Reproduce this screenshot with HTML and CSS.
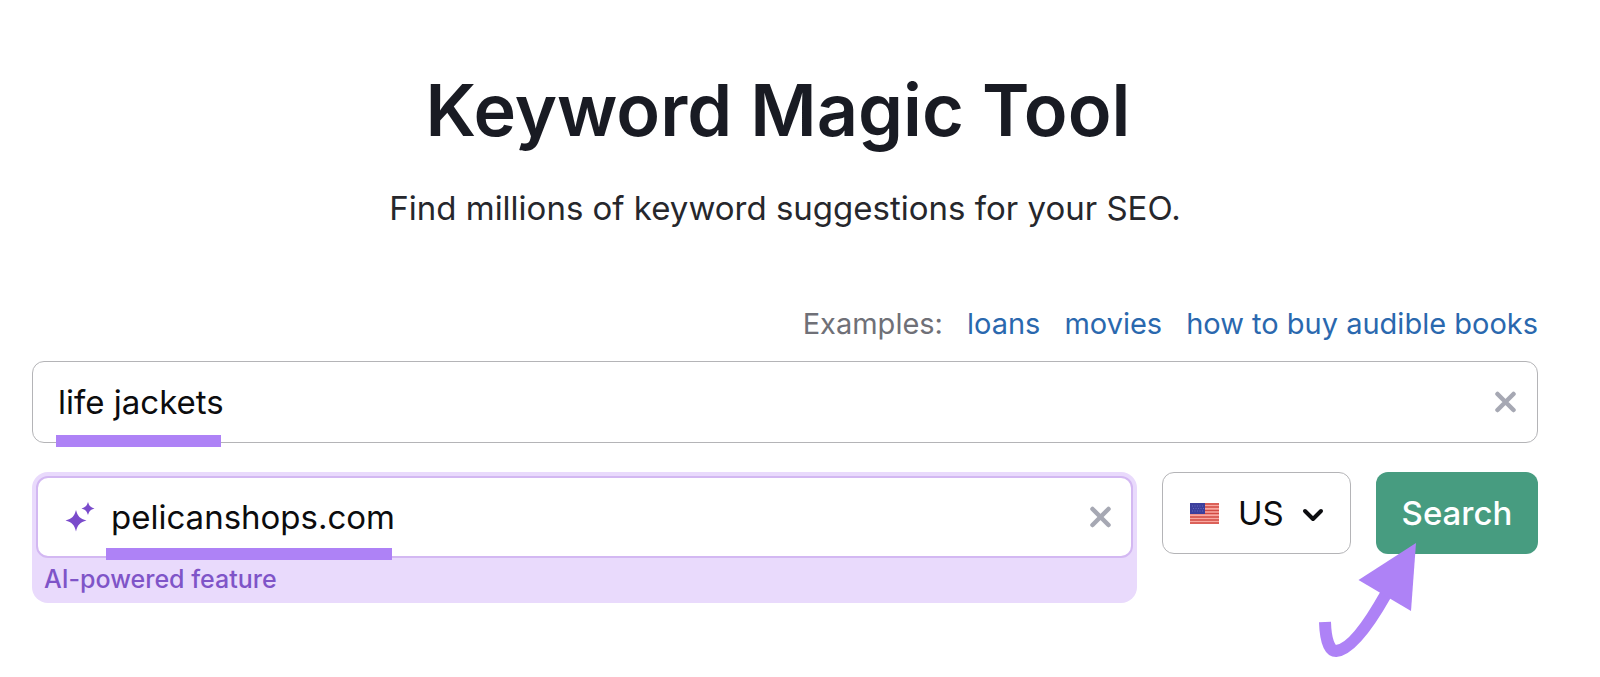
FILE: index.html
```html
<!DOCTYPE html>
<html lang="en">
<head>
    <meta charset="UTF-8">
    <meta name="viewport" content="width=device-width, initial-scale=1.0">
    <title>Keyword Magic Tool</title>
    <link rel="stylesheet" href="styles.css">
</head>
<body>
    <main class="page">
        <h1 class="title">Keyword Magic Tool</h1>
        <p class="subtitle">Find millions of keyword suggestions for your SEO.</p>

        <div class="examples">
            <span class="examples-label">Examples:</span>
            <a href="#">loans</a>
            <a href="#">movies</a>
            <a href="#">how to buy audible books</a>
        </div>

        <form class="search-form">
            <div class="field">
                <input type="text" class="field-input" value="life jackets" aria-label="Keyword">
                <button type="button" class="clear" aria-label="Clear keyword">
                    <svg viewBox="0 0 22 22"><path d="M2.500 3L18.500 19M18.500 3L2.500 19"/></svg>
                </button>
                <span class="marker marker-keyword"></span>
            </div>

            <div class="row">
                <div class="ai-box">
                    <div class="field field-ai">
                        <svg class="sparkle" viewBox="0 0 30 30">
                            <path d="M11 8C12.500 14 15 17 21.500 18.500C15 20 12.500 23 11 29.500C9.500 23 7 20 .5 18.500C7 17 9.500 14 11 8Z"/>
                            <path d="M23 0C24.200 3.800 25.500 5.200 29.500 6.500C25.500 7.800 24.200 9.200 23 13C21.800 9.200 20.500 7.800 16.500 6.500C20.500 5.200 21.800 3.800 23 0Z"/>
                        </svg>
                        <input type="text" id="domain" class="field-input" value="pelicanshops.com">
                        <button type="button" class="clear" aria-label="Clear domain">
                            <svg viewBox="0 0 22 22"><path d="M2.500 3L18.500 19M18.500 3L2.500 19"/></svg>
                        </button>
                        <span class="marker marker-domain"></span>
                    </div>
                    <label class="ai-label" for="domain">AI-powered feature</label>
                </div>

                <div class="country">
                    <svg class="flag" viewBox="0 0 29 21">
                        <rect width="29" height="21" fill="#f9a8a0"/>
                        <path d="M0 1H29M0 4H29M0 7.500H29M0 10.500H29M0 14H29M0 17H29M0 20H29" stroke="#d14a42" stroke-width="1.500"/>
                        <rect width="15" height="11" fill="#3c3f9c"/>
                        <path d="M2 3H14M3 5.500H14M2 8H14" stroke="#6468bd" stroke-width="1" stroke-dasharray="1 1.500"/>
                    </svg>
                    <select class="country-select" aria-label="Country">
                        <option>US</option>
                    </select>
                    <svg class="chevron" viewBox="0 0 22 14"><path d="M3 3L11 11L19 3"/></svg>
                </div>

                <div class="submit">
                    <button type="submit" class="search-btn">Search</button>
                    <svg class="arrow" viewBox="0 0 104 120">
                        <path class="arrow-line" d="M9 82C9.500 99 13 111 20 111C34 110 52 86 70 54"/>
                        <path class="arrow-head" d="M100 3L42.500 40L95 71Z"/>
                    </svg>
                </div>
            </div>
        </form>
    </main>
</body>
</html>
```
FILE: styles.css
```css
* {
    box-sizing: border-box;
}

body {
    margin: 0;
    background: #fff;
    color: #191b23;
    font-family: Inter, "Liberation Sans", sans-serif;
}

.page {
    padding: 64px 62px 64px 32px;
}

.title {
    margin: 0;
    padding-right: 14px;
    font-size: 72px;
    font-weight: 600;
    line-height: 92px;
    text-align: center;
}

.subtitle {
    margin: 32px 0 0;
    color: #26272c;
    font-size: 33px;
    line-height: 40px;
    text-align: center;
}

.examples {
    display: flex;
    justify-content: flex-end;
    gap: 24px;
    margin-top: 79px;
    font-size: 29px;
    line-height: 34px;
}

.examples-label {
    color: #6f7077;
}

.examples a {
    color: #2a68ae;
    text-decoration: none;
}

.search-form {
    display: flex;
    flex-direction: column;
    gap: 29px;
    margin-top: 20px;
}

.field {
    position: relative;
    display: flex;
    align-items: center;
    height: 82px;
    padding: 0 20px 0 25px;
    border: 1px solid #b4b4b7;
    border-radius: 12px;
    background: #fff;
}

.field-input {
    flex: 1;
    min-width: 0;
    padding: 0;
    border: 0;
    outline: 0;
    background: none;
    color: #0c0c0e;
    font: inherit;
    font-size: 33px;
}

.clear {
    width: 22px;
    height: 22px;
    padding: 0;
    border: 0;
    background: none;
    cursor: pointer;
}

.clear svg {
    display: block;
    fill: none;
    stroke: #a6a8b3;
    stroke-width: 4.5;
    stroke-linecap: round;
}

/* highlighter strokes under the typed values */
.marker {
    position: absolute;
    height: 12px;
    background: #ae82f6;
}

.marker-keyword {
    left: 23px;
    bottom: -5px;
    width: 165px;
}

.marker-domain {
    left: 68px;
    bottom: -4px;
    width: 286px;
}

.row {
    display: flex;
    align-items: flex-start;
    gap: 25px;
}

.ai-box {
    flex: 1;
    padding: 4px 4px 10px;
    border-radius: 16px;
    background: #e9dafc;
}

.field-ai {
    padding: 0 19px 0 27px;
    border: 2px solid #d3b8f2;
}

.sparkle {
    width: 30px;
    height: 30px;
    margin-right: 16px;
    fill: #7a4bcb;
}

.ai-label {
    display: block;
    margin: 7px 0 0 8px;
    color: #7f54c8;
    font-size: 25px;
    font-weight: 500;
    line-height: 28px;
}

.country {
    position: relative;
    width: 189px;
}

.country-select {
    width: 100%;
    height: 82px;
    padding: 0 0 0 75px;
    border: 1px solid #b4b4b7;
    border-radius: 12px;
    appearance: none;
    background: #fff;
    color: #0c0c0e;
    font: inherit;
    font-size: 33px;
}

.flag {
    position: absolute;
    top: 31px;
    left: 28px;
    width: 29px;
    height: 21px;
}

.chevron {
    position: absolute;
    top: 36px;
    right: 27px;
    width: 22px;
    height: 14px;
    fill: none;
    stroke: #0c0d10;
    stroke-width: 4;
    stroke-linecap: round;
    stroke-linejoin: round;
    pointer-events: none;
}

.submit {
    position: relative;
    width: 162px;
}

.search-btn {
    width: 100%;
    height: 82px;
    padding: 0;
    border: 0;
    border-radius: 12px;
    background: #479c80;
    color: #fff;
    font: inherit;
    font-size: 33px;
    font-weight: 500;
    cursor: pointer;
}

/* arrow pointing at the search button */
.arrow {
    position: absolute;
    top: 68px;
    left: -60px;
    width: 104px;
    height: 120px;
    pointer-events: none;
}

.arrow-line {
    fill: none;
    stroke: #ae82f6;
    stroke-width: 12;
}

.arrow-head {
    fill: #ae82f6;
}
```
